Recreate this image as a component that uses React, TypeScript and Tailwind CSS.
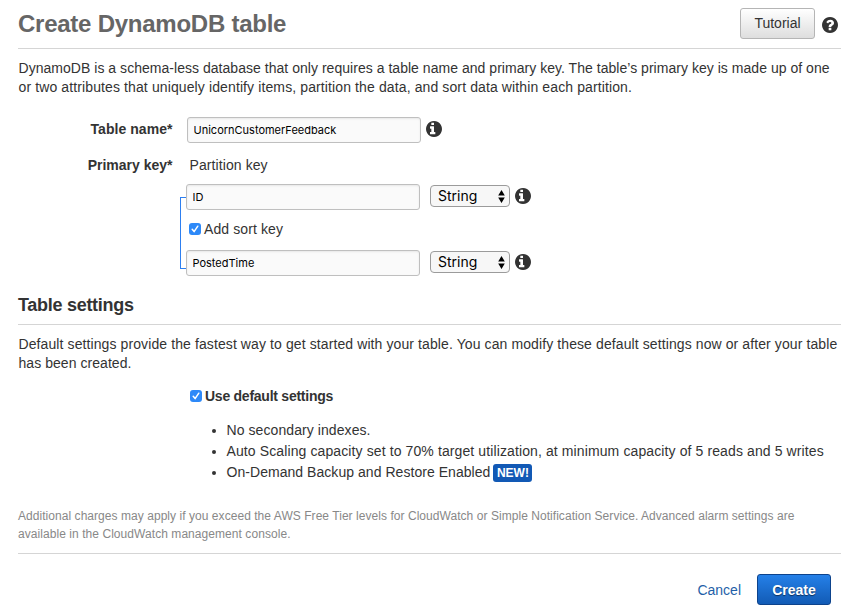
import React from "react";

const DISC =
  "M1664 896q0 209-103 385.5t-279.5 279.5-385.5 103-385.5-103-279.5-279.5-103-385.5 103-385.5 279.5-279.5 385.5-103 385.5 103 279.5 279.5 103 385.5z";
const INFO =
  "M1024 1376v-160q0-14-9-23t-23-9h-96v-512q0-14-9-23t-23-9h-320q-14 0-23 9t-9 23v160q0 14 9 23t23 9h96v320h-96q-14 0-23 9t-9 23v160q0 14 9 23t23 9h448q14 0 23-9t9-23zM896 480v-160q0-14-9-23t-23-9h-192q-14 0-23 9t-9 23v160q0 14 9 23t23 9h192q14 0 23-9t9-23z";
const QUESTION =
  "M1024 1376v-192q0-14-9-23t-23-9h-192q-14 0-23 9t-9 23v192q0 14 9 23t23 9h192q14 0 23-9t9-23zM1280 704q0-88-55.5-163t-138.5-116-170-41q-243 0-371 213-15 24 8 42l132 100q7 6 19 6 16 0 25-12 53-68 86-92 34-24 86-24 48 0 85.5 26t37.5 59q0 38-20 61t-68 45q-63 28-115.5 86.5t-52.5 125.5v36q0 14 9 23t23 9h192q14 0 23-9t9-23q0-19 21.5-49.5t54.5-49.5q32-18 49-28.5t46-35 44.5-48 28-60.5 12.5-81z";

function DiscIcon({ glyph, className }: { glyph: string; className: string }) {
  return (
    <svg viewBox="128 128 1536 1536" className={className}>
      <path d={DISC} fill="#333" />
      <path d={glyph} fill="#fff" />
    </svg>
  );
}

function TextField({ value }: { value: string }) {
  return (
    <input
      type="text"
      defaultValue={value}
      className="block h-[26px] w-[234px] rounded-[3px] border border-[#bfbfbf] bg-[#fafafa] px-[5.5px] font-[Inter,sans-serif] text-[11px] text-black shadow-[inset_0_1px_2px_rgba(0,0,0,0.08)] outline-none"
    />
  );
}

function TypeSelect() {
  return (
    <div className="mb-[2px] ml-[10px] flex h-[22px] w-[80px] items-center justify-between rounded-[4px] border border-[#9b9b9b] bg-[#f7f7f7] pr-[4px] pl-[7px] font-[Inter,sans-serif] text-[14px] leading-[20px] text-black">
      <span>String</span>
      <svg width="7" height="13" viewBox="0 0 7 13" fill="#000">
        <path d="M3.5 0 6.8 5.4H.2zM3.5 13 .2 7.6h6.6z" />
      </svg>
    </div>
  );
}

function Check() {
  return (
    <span className="mb-[1px] flex h-[12px] w-[12px] items-center justify-center rounded-[3px] bg-[#2d89f8]">
      <svg width="8" height="8" viewBox="0 0 8 8" fill="none" stroke="#fff" strokeWidth="1.5" strokeLinecap="round" strokeLinejoin="round">
        <path d="M1.2 4.3 3.1 6.6 6.8 1.2" />
      </svg>
    </span>
  );
}

function Info() {
  return <DiscIcon glyph={INFO} className="mb-[2px] ml-[5px] h-[16px] w-[16px]" />;
}

export default function App() {
  return (
    <main className="h-[615px] w-[853px] overflow-hidden bg-white pr-[12px] pl-[18px] font-['Liberation_Sans',Arial,sans-serif] text-[14px] leading-[19px] whitespace-nowrap text-[#333]">
      <header className="flex h-[49px] justify-between border-b border-[#d5d5d5]">
        <h1 className="pt-[9px] text-[24px] leading-[29px] font-bold tracking-[-0.25px] text-[#666]">Create DynamoDB table</h1>
        <div className="flex pt-[8px]">
          <button className="h-[31px] w-[75px] rounded-[3px] border border-[#b5b5b5] bg-linear-to-b from-white to-[#dedede] text-[14px] text-[#333]">Tutorial</button>
          <DiscIcon glyph={QUESTION} className="mt-[9px] mr-[3px] ml-[7px] h-[16px] w-[16px]" />
        </div>
      </header>

      <p className="mt-[10px] pl-[0.5px]">
        <span className="tracking-[0.033px]">DynamoDB is a schema-less database that only requires a table name and primary key. The table’s primary key is made up of one</span>
        <br />
        <span className="tracking-[0.115px]">or two attributes that uniquely identify items, partition the data, and sort data within each partition.</span>
      </p>

      <div className="mt-[20px] flex h-[26px]">
        <label className="w-[154.5px] pt-[3px] text-right font-bold tracking-[0.05px]">Table name*</label>
        <div className="ml-[14.5px] flex items-center">
          <TextField value="UnicornCustomerFeedback" />
          <Info />
        </div>
      </div>

      <div className="mt-[13px] flex h-[120px]">
        <label className="w-[154.5px] text-right font-bold">Primary key*</label>
        <div className="ml-[7.5px]">
          <div className="pl-[9.5px] tracking-[0.09px]">Partition key</div>
          <div className="mt-[9px] flex h-[92px]">
            <div className="mt-[13px] h-[72px] w-[6px] border-y border-l border-[#2d7ff0]" />
            <div>
              <div className="flex h-[26px] items-center">
                <TextField value="ID" />
                <TypeSelect />
                <Info />
              </div>
              <div className="flex h-[40px] items-center gap-[3px] pb-[1px] pl-[3px]">
                <Check />
                <span className="tracking-[0.1px]">Add sort key</span>
              </div>
              <div className="flex h-[26px] items-center">
                <TextField value="PostedTime" />
                <TypeSelect />
                <Info />
              </div>
            </div>
          </div>
        </div>
      </div>

      <h2 className="mt-[17px] h-[32px] border-b border-[#d5d5d5] text-[18px] leading-[24px] font-bold tracking-[-0.29px]">Table settings</h2>
      <p className="mt-[10px] pl-[0.5px]">
        <span className="tracking-[0.1px]">Default settings provide the fastest way to get started with your table. You can modify these default settings now or after your table</span>
        <br />
        <span className="tracking-[0.05px]">has been created.</span>
      </p>

      <div className="mt-[14px] flex h-[19px] items-center gap-[3px] pl-[172px] font-bold">
        <Check />
        <span className="tracking-[-0.25px]">Use default settings</span>
      </div>
      <ul className="mt-[14px] list-disc pl-[208.5px] leading-[21px]">
        <li className="tracking-[0.08px]">No secondary indexes.</li>
        <li className="tracking-[0.11px]">Auto Scaling capacity set to 70% target utilization, at minimum capacity of 5 reads and 5 writes</li>
        <li>
          <div className="flex items-center gap-[3px]">
            <span className="tracking-[0.045px]">On-Demand Backup and Restore Enabled</span>
            <span className="flex h-[18px] w-[39px] items-center justify-center rounded-[3px] bg-[#1259b5] pt-[1px] text-[12px] font-bold text-white">NEW!</span>
          </div>
        </li>
      </ul>

      <p className="mt-[24px] h-[47px] border-b border-[#d5d5d5] text-[12px] leading-[18px] text-[#888]">
        <span className="tracking-[0.049px]">Additional charges may apply if you exceed the AWS Free Tier levels for CloudWatch or Simple Notification Service. Advanced alarm settings are</span>
        <br />
        <span className="tracking-[0.06px]">available in the CloudWatch management console.</span>
      </p>

      <footer className="mt-[20px] flex items-center justify-end gap-[16px] pr-[10px]">
        <a className="pt-[1px] text-[#1f5fa8]">Cancel</a>
        <button className="h-[31px] w-[74px] rounded-[3px] border border-[#0d438c] bg-linear-to-b from-[#2580e8] to-[#125bb5] pt-[2px] text-[14px] font-bold text-white [text-shadow:0_1px_1px_#0008]">Create</button>
      </footer>
    </main>
  );
}
